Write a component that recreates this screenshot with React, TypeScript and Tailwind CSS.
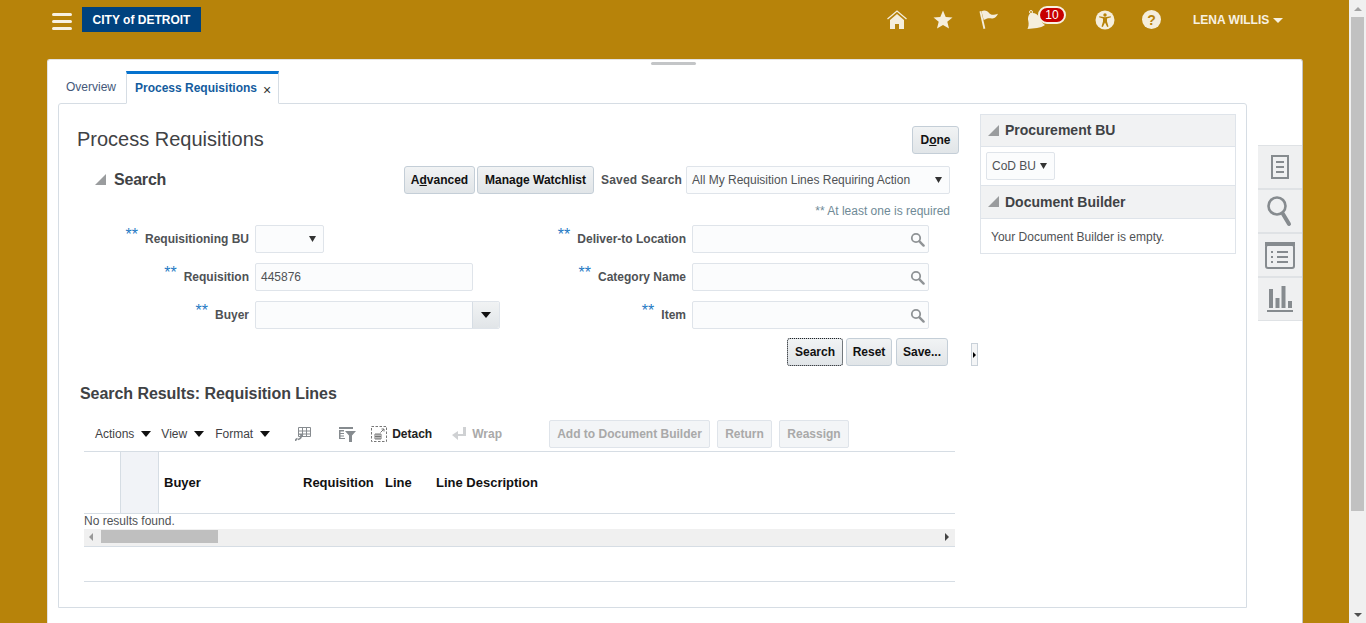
import { ReactNode } from 'react';

const cream = '#f5eedc';

function Caret({ className = '' }: { className?: string }) {
  return (
    <svg width="10" height="6" viewBox="0 0 10 6" preserveAspectRatio="none" className={className}>
      <path d="M0 0h10L5 6z" fill="currentColor" />
    </svg>
  );
}

function Disclosure() {
  return (
    <svg width="12" height="12" viewBox="0 0 12 12" className="shrink-0">
      <path d="M11 0v11H0z" fill="#9a9c9e" />
    </svg>
  );
}

function Magnifier() {
  return (
    <svg width="15" height="15" viewBox="0 0 15 15" fill="none" stroke="#8f9396">
      <circle cx="6" cy="6" r="4.2" strokeWidth="1.8" />
      <path d="M9.4 9.4l4.2 4.2" strokeWidth="2.4" strokeLinecap="round" />
    </svg>
  );
}

function Btn({ children, className = '' }: { children: ReactNode; className?: string }) {
  return (
    <button className={`h-[28px] rounded-[3px] border border-[#c4ced7] bg-gradient-to-b from-[#f1f3f4] to-[#e1e5e8] text-[12px] font-bold text-[#111] ${className}`}>
      {children}
    </button>
  );
}

function DisabledBtn({ children, className = '' }: { children: ReactNode; className?: string }) {
  return (
    <button className={`h-[28px] rounded-[2px] border border-[#dfe4ea] bg-[#f3f5f7] text-[12px] font-bold text-[#a9a9a9] ${className}`}>
      {children}
    </button>
  );
}

function Label({ text, width }: { text: string; width: string }) {
  return (
    <div className={`flex items-center justify-end gap-[7px] text-[12px] font-bold text-[#4f5255] ${width}`}>
      <span className="relative top-[-4px] text-[16px] font-normal leading-none text-[#1f7ac4]">**</span>
      <span>{text}</span>
    </div>
  );
}

function SearchField() {
  return (
    <div className="flex h-[28px] w-[237px] items-center justify-end rounded-[2px] border border-[#dfe4ea] bg-[#fbfcfd] pr-[3px]">
      <Magnifier />
    </div>
  );
}

function SelectBox({ text, className = '' }: { text?: string; className?: string }) {
  return (
    <div className={`flex h-[28px] items-center justify-between rounded-[2px] border border-[#dfe4ea] bg-[#fbfcfd] pl-[5px] pr-[7px] text-[12px] text-[#4f5255] ${className}`}>
      <span>{text}</span>
      <Caret className="h-[6px] w-[7px] text-[#333]" />
    </div>
  );
}

function Header() {
  return (
    <header className="flex h-[59px] shrink-0 items-start">
      <div className="ml-[52px] mt-[13px] flex w-[20px] flex-col gap-[4px]">
        <span className="h-[3px] rounded-full bg-[#f7f1e2]" />
        <span className="h-[3px] rounded-full bg-[#f7f1e2]" />
        <span className="h-[3px] rounded-full bg-[#f7f1e2]" />
      </div>
      <div className="ml-[10px] mt-[7px] flex h-[25px] w-[119px] items-center justify-center bg-[#00427e] text-[12px] font-bold text-white">
        CITY of DETROIT
      </div>
      <div className="ml-[686px] mt-[10px] flex items-start">
        <svg width="20" height="20" viewBox="0 0 20 20">
          <path d="M0.5 9L10 1l9.500 8" fill="none" stroke={cream} strokeWidth="1.3" />
          <path d="M3 10l7-6 7 6v9h-5v-5H8v5H3z" fill={cream} />
        </svg>
        <svg width="20" height="20" viewBox="0 0 20 20" className="ml-[26px]">
          <path d="M10 0.500l2.700 6.400 6.800.5-5.200 4.400 1.700 6.700L10 15l-6 3.500 1.700-6.700L.5 7.400l6.800-.5z" fill={cream} />
        </svg>
        <svg width="20" height="20" viewBox="0 0 20 20" className="ml-[26px]">
          <path d="M0.500 1.500l1.800-.6 4 17.600-1.800.5z" fill={cream} />
          <path d="M2.500 1.200C6 -.3 8.500 1 10.500 3.500c2 2 4.500 1.500 8.500.3-1.200 2.500-3 5-6 4.700-2.500-.3-3.500-1-8.300 1.500z" fill={cream} />
        </svg>
        <div className="relative ml-[27px] h-[20px] w-[30px]">
          <svg width="22" height="20" viewBox="0 0 22 20" className="absolute left-0 top-0">
            <circle cx="5" cy="2" r="1.500" fill="none" stroke={cream} />
            <path d="M5 3c4-.5 7 1.500 8.500 4.500 1.200 3 2.700 5.500 5.500 7.500-2 1.500-5 2.500-8 3l-9.500 1c1-2 1.500-5 .8-8C1.500 8 2.500 4 5 3z" fill={cream} />
          </svg>
          <span className="absolute left-[12px] top-[-4px] flex h-[18px] w-[28px] items-center justify-center rounded-full border-2 border-[#f7f1e2] bg-[#c70000] text-[12px] leading-none text-white">
            10
          </span>
        </div>
        <svg width="20" height="20" viewBox="0 0 20 20" className="ml-[39px]">
          <circle cx="10" cy="10" r="9.500" fill={cream} />
          <circle cx="10" cy="5" r="1.700" fill="#b7830a" />
          <path d="M4 7.300l4 1.200v3L6.500 16.500l1.300.4L10 12.500l2.200 4.400 1.300-.4L12 11.500v-3l4-1.200-.3-1L10 7.300 4.300 6.300z" fill="#b7830a" />
        </svg>
        <div className="ml-[27px] flex h-[19px] w-[19px] items-center justify-center rounded-full bg-[#f5eedc] text-[14px] font-bold leading-none text-[#b7830a]">
          ?
        </div>
        <div className="ml-[32px] flex h-[20px] items-center gap-[4px] text-[12px] font-bold text-[#f7f1e2]">
          LENA WILLIS
          <Caret className="h-[5px] w-[10px]" />
        </div>
      </div>
    </header>
  );
}

function SideRail() {
  const cell = 'flex h-[44px] w-[44px] items-center justify-center border-y border-[#dfe2e5] bg-[#eff0f1]';
  return (
    <div className="ml-[11px] mt-[42px] flex w-[44px] flex-col self-start">
      <div className={cell}>
        <svg width="18" height="24" viewBox="0 0 18 24" fill="none" stroke="#868b8f">
          <rect x="1" y="1" width="16" height="22" strokeWidth="2" />
          <path d="M5 7h8M5 12h8M5 17h8" strokeWidth="2" />
        </svg>
      </div>
      <div className={cell}>
        <svg width="28" height="32" viewBox="0 0 28 32" fill="none" stroke="#868b8f">
          <circle cx="11" cy="11" r="8.500" strokeWidth="2.600" />
          <path d="M17 19l6 10" strokeWidth="4" strokeLinecap="round" />
        </svg>
      </div>
      <div className={cell}>
        <svg width="30" height="28" viewBox="0 0 30 28" fill="none" stroke="#868b8f">
          <path d="M0 1h30v4H0z" fill="#868b8f" stroke="none" />
          <rect x="1" y="4" width="28" height="23" rx="2" strokeWidth="2" />
          <path d="M12 11h11M12 16h11M12 21h11M6 11h2M6 16h2M6 21h2" strokeWidth="2" />
        </svg>
      </div>
      <div className={cell}>
        <svg width="26" height="26" viewBox="0 0 26 26" fill="#868b8f">
          <rect x="2" y="3" width="4" height="19" />
          <rect x="8.500" y="12" width="4" height="10" />
          <rect x="14.500" y="0" width="4" height="22" />
          <rect x="21" y="15" width="4" height="7" />
          <rect x="0" y="24" width="26" height="2" />
        </svg>
      </div>
    </div>
  );
}

function RightPanel() {
  const head = 'flex items-center gap-[5px] border-b border-[#dfe4ea] bg-[#f1f2f3] pl-[7px] text-[14px] font-bold text-[#3f4245]';
  return (
    <aside className="mt-[10px] h-[140px] w-[256px] border border-[#dfe4ea]">
      <div className={`${head} h-[32px]`}>
        <Disclosure />
        Procurement BU
      </div>
      <div className="flex h-[39px] items-center border-b border-[#dfe4ea] pl-[5px]">
        <SelectBox text="CoD BU" className="h-[27px] w-[69px]" />
      </div>
      <div className={`${head} h-[33px]`}>
        <Disclosure />
        Document Builder
      </div>
      <div className="pl-[10px] pt-[9px] text-[12px] text-[#4f5255]">Your Document Builder is empty.</div>
    </aside>
  );
}

function Results() {
  const tool = 'flex items-center gap-[7px] text-[12px] text-[#3f4245]';
  return (
    <section>
      <h2 className="ml-[21px] mt-[18px] text-[16px] font-bold leading-[20px] tracking-[-0.06px] text-[#3f4245]">Search Results: Requisition Lines</h2>
      <div className="ml-[25px] mt-[16px] w-[871px]">
        <div className="flex h-[32px] items-start border-b border-[#d6dde4]">
          <div className="ml-[11px] flex h-[28px] items-center">
            <span className={tool}>Actions <Caret className="text-[#111]" /></span>
            <span className={`${tool} ml-[10px]`}>View <Caret className="text-[#111]" /></span>
            <span className={`${tool} ml-[11px]`}>Format <Caret className="text-[#111]" /></span>
            <svg width="16" height="16" viewBox="0 0 16 16" className="ml-[25px]" fill="none" stroke="#868b8f">
              <path d="M3.500 1.500h12v9h-12zM7.500 1.500v9M11.500 1.500v9M3.500 5h12M3.500 8h12" />
              <path d="M6.500 8.500c0 3-1 4.500-3.500 5M.5 15c0-1 .5-2 2-2.500" strokeWidth="1.600" />
              <path d="M4 8l4.500 0-2 3z" fill="#868b8f" stroke="none" />
            </svg>
            <svg width="17" height="15" viewBox="0 0 17 15" className="ml-[28px]">
              <path d="M0 0h14v2H0zM0 3h5v1.500H1.500V6H5v1H1.500v1.500H5v1H1.500V11H6v1H0z" fill="#868b8f" />
              <path d="M6 4h11l-4 4.500V15h-3V8.500z" fill="#868b8f" />
            </svg>
            <svg width="16" height="16" viewBox="0 0 16 16" className="ml-[15px]" fill="none" stroke="#777">
              <rect x=".5" y=".5" width="15" height="15" strokeDasharray="2.500 1.500" />
              <path d="M4 8h6v5H4zM4 10.500h6M6 8v5M8 8v5" />
              <path d="M9.500 6.500l3.500-3.500M10.500 3H13v2.500" />
            </svg>
            <span className="ml-[5px] text-[12px] font-bold text-[#222]">Detach</span>
            <svg width="14" height="14" viewBox="0 0 14 14" className="ml-[20px]">
              <path d="M11 0h3v9H6v4L0 8l6-4v3h5z" fill="#cfd1d3" />
            </svg>
            <span className="ml-[6px] text-[12px] font-bold text-[#a9a9a9]">Wrap</span>
          </div>
          <div className="ml-[47px] flex gap-[7px]">
            <DisabledBtn className="w-[161px]">Add to Document Builder</DisabledBtn>
            <DisabledBtn className="w-[55px]">Return</DisabledBtn>
            <DisabledBtn className="w-[70px]">Reassign</DisabledBtn>
          </div>
        </div>
        <div className="flex h-[62px] items-center border-b border-[#d6dde4] text-[13px] font-bold text-[#111]">
          <div className="ml-[36px] h-full w-[39px] border-x border-[#d6dde4] bg-[#f1f3f7]" />
          <span className="ml-[5px] w-[139px]">Buyer</span>
          <span className="w-[82px]">Requisition</span>
          <span className="w-[51px]">Line</span>
          <span>Line Description</span>
        </div>
        <div className="h-[15px] text-[12px] leading-[15px] text-[#4f5255]">No results found.</div>
        <div className="flex h-[18px] items-center border-b border-[#d6dde4] bg-[#f0f0f0] pb-[2px] pr-[6px] pl-[5px]">
          <span className="h-0 w-0 border-y-[4px] border-r-[4px] border-y-transparent border-r-[#999]" />
          <span className="ml-[8px] h-[13px] w-[117px] bg-[#bfbfbf]" />
          <span className="ml-auto h-0 w-0 border-y-[4px] border-l-[4px] border-y-transparent border-l-[#444]" />
        </div>
        <div className="mt-[34px] border-b border-[#d6dde4]" />
      </div>
    </section>
  );
}

function SearchForm() {
  return (
    <section>
      <div className="flex items-center">
        <div className="ml-[36px] flex w-[72px] items-center gap-[7px]">
          <Disclosure />
          <h2 className="text-[16px] font-bold tracking-[-0.2px] text-[#3f4245]">Search</h2>
        </div>
        <div className="ml-[237px] flex items-center gap-[2px]">
          <Btn className="w-[71px]">
            A<span className="underline">d</span>vanced
          </Btn>
          <Btn className="w-[117px]">Manage Watchlist</Btn>
        </div>
        <span className="ml-[7px] w-[78px] whitespace-nowrap text-[12px] font-bold tracking-[0.2px] text-[#4f5255]">Saved Search</span>
        <SelectBox text="All My Requisition Lines Requiring Action" className="ml-[7px] w-[264px]" />
      </div>
      <div className="mt-[10px] h-[14px] text-right text-[12px] leading-[14px] text-[#6f8a96]">** At least one is required</div>
      <div className="mt-[7px] flex">
        <div className="flex flex-col gap-[10px]">
          <div className="flex items-center gap-[6px]">
            <Label text="Requisitioning BU" width="w-[190px]" />
            <SelectBox className="w-[69px]" />
          </div>
          <div className="flex items-center gap-[6px]">
            <Label text="Requisition" width="w-[190px]" />
            <div className="flex h-[28px] w-[218px] items-center rounded-[2px] border border-[#dfe4ea] bg-[#fbfcfd] pl-[5px] text-[12px] text-[#4f5255]">445876</div>
          </div>
          <div className="flex items-center gap-[6px]">
            <Label text="Buyer" width="w-[190px]" />
            <div className="flex h-[28px] w-[245px] rounded-[2px] border border-[#dfe4ea] bg-[#fbfcfd]">
              <div className="ml-auto flex w-[27px] items-center justify-center rounded-r-[2px] border-l border-[#d6dde4] bg-gradient-to-b from-[#f1f3f4] to-[#e1e5e8]">
                <Caret className="text-[#111]" />
              </div>
            </div>
          </div>
        </div>
        <div className="ml-[-6px] flex flex-col gap-[10px]">
          {['Deliver-to Location', 'Category Name', 'Item'].map(name => (
            <div key={name} className="flex items-center gap-[6px]">
              <Label text={name} width="w-[192px]" />
              <SearchField />
            </div>
          ))}
        </div>
      </div>
      <div className="mt-[9px] flex items-center">
        <div className="ml-[728px] flex shrink-0 gap-[3px]">
          <Btn className="w-[56px] outline-1 outline-dotted outline-offset-[-1px] outline-[#222]">Search</Btn>
          <Btn className="w-[46px]">Reset</Btn>
          <Btn className="ml-[1px] w-[52px]">Save...</Btn>
        </div>
        <div className="ml-[23px] mt-[5px] flex h-[23px] w-[7px] shrink-0 items-center justify-center border border-[#c9d1d9] bg-[#f4f5f6]">
          <span className="h-0 w-0 border-y-[3px] border-l-[3px] border-y-transparent border-l-black" />
        </div>
      </div>
    </section>
  );
}

export default function App() {
  return (
    <div className="flex h-[623px] w-[1366px] overflow-hidden bg-[#b7830a] font-['Liberation_Sans',Arial,sans-serif]">
      <div className="flex w-[1349px] flex-col">
        <Header />
        <main className="relative ml-[47px] flex w-[1256px] flex-1 flex-col rounded-t-[3px] border-x border-t border-l-[#e3e3e3] border-r-[#c4c4c4] border-t-[#e3e3e3] bg-white">
          <div className="absolute left-[603px] top-[2px] h-[3px] w-[45px] rounded-full bg-[#c3c5c7]" />
          <nav className="ml-[9px] mt-[10px] flex h-[33px] items-end">
            <span className="mb-[7px] ml-[9px] w-[60px] text-[12px] text-[#44587a]">Overview</span>
            <div className="z-10 mb-[-1px] flex h-[33px] w-[153px] items-center border-x border-b border-t-[3px] border-[#d6dde4] border-t-[#0572ce] border-b-white bg-white pb-[2px] pl-[8px]">
              <span className="text-[12px] font-bold text-[#145c9e]">Process Requisitions</span>
              <span className="ml-[6px] mt-[4px] text-[14px] leading-none text-[#333]">×</span>
            </div>
          </nav>
          <div className="ml-[10px] flex items-start">
            <div className="flex h-[505px] w-[1189px] rounded-t-[3px] border border-[#d6dde4]">
              <div className="w-[921px] shrink-0 pr-[30px]">
                <div className="flex items-start justify-between pl-[18px] pt-[22px]">
                  <h1 className="text-[20px] leading-[26px] text-[#3f4245]">Process Requisitions</h1>
                  <Btn className="mr-[-9px] w-[47px]">
                    D<span className="underline">o</span>ne
                  </Btn>
                </div>
                <div className="mt-[12px]">
                  <SearchForm />
                  <Results />
                </div>
              </div>
              <RightPanel />
            </div>
            <SideRail />
          </div>
        </main>
      </div>
      <div className="flex w-[17px] flex-col bg-[#f0f0f0]">
        <div className="flex h-[17px] items-center justify-center">
          <span className="h-0 w-0 border-x-[4px] border-b-[4px] border-x-transparent border-b-[#a3a3a3]" />
        </div>
        <div className="mx-[2px] h-[494px] bg-[#c1c1c1]" />
        <div className="mt-auto flex h-[17px] items-center justify-center">
          <span className="h-0 w-0 border-x-[4px] border-t-[4px] border-x-transparent border-t-[#505050]" />
        </div>
      </div>
    </div>
  );
}
